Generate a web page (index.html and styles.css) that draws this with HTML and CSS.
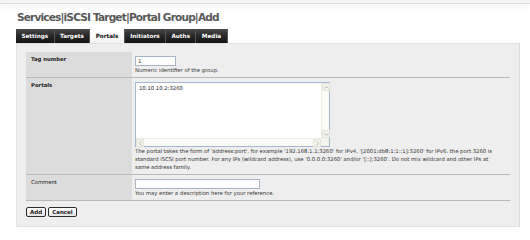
FILE: index.html
```html
<!DOCTYPE html>
<html lang="en">
<head>
    <meta charset="UTF-8">
    <title>Services|iSCSI Target|Portal Group|Add</title>
    <link rel="stylesheet" href="styles.css">
</head>
<body>
    <div class="topbar"></div>
    <div class="page">
        <h1 class="title">Services|iSCSI Target|Portal Group|Add</h1>

        <ul class="tabs">
            <li><a href="#">Settings</a></li>
            <li><a href="#">Targets</a></li>
            <li class="active"><a href="#">Portals</a></li>
            <li><a href="#">Initiators</a></li>
            <li><a href="#">Auths</a></li>
            <li><a href="#">Media</a></li>
        </ul>

        <div class="panel">
            <form>
                <table class="form-table">
                    <tr>
                        <td class="label required">Tag number</td>
                        <td class="value">
                            <input type="text" class="field tag" value="1">
                            <div class="hint">Numeric identifier of the group.</div>
                        </td>
                    </tr>
                    <tr>
                        <td class="label required">Portals</td>
                        <td class="value">
                            <div class="textbox">
                                <textarea class="area" wrap="off">10.10.10.2:3260</textarea>
                                <div class="vscroll">
                                    <span class="arrow"><svg width="5" height="3" viewBox="0 0 5 3"><polyline points="0.5,2.5 2.5,0.5 4.5,2.5" /></svg></span>
                                    <span class="arrow"><svg width="5" height="3" viewBox="0 0 5 3"><polyline points="0.5,0.5 2.5,2.5 4.5,0.5" /></svg></span>
                                </div>
                                <div class="hscroll">
                                    <span class="arrow"><svg width="3" height="5" viewBox="0 0 3 5"><polyline points="2.5,0.5 0.5,2.5 2.5,4.5" /></svg></span>
                                    <span class="arrow"><svg width="3" height="5" viewBox="0 0 3 5"><polyline points="0.5,0.5 2.5,2.5 0.5,4.5" /></svg></span>
                                </div>
                                <div class="corner"></div>
                            </div>
                            <div class="hint long">The portal takes the form of 'address:port'. for example '192.168.1.1:3260' for IPv4, '[2001:db8:1:1::1]:3260' for IPv6. the port 3260 is standard iSCSI port number. For any IPs (wildcard address), use '0.0.0.0:3260' and/or '[::]:3260'. Do not mix wildcard and other IPs at same address family.</div>
                        </td>
                    </tr>
                    <tr>
                        <td class="label">Comment</td>
                        <td class="value">
                            <input type="text" class="field comment">
                            <div class="hint">You may enter a description here for your reference.</div>
                        </td>
                    </tr>
                </table>

                <div class="buttons">
                    <button type="button">Add</button>
                    <button type="button">Cancel</button>
                </div>
            </form>
        </div>
    </div>
</body>
</html>
```

FILE: styles.css
```css
body {
    margin: 0;
    font-family: 'DejaVu Sans', sans-serif;
    font-size: 5.3px;
    color: #222;
    background-color: #fff;
}

.topbar {
    height: 3px;
    background-color: #f4f4f4;
    border-bottom: 1px solid #dcdcdc;
    box-shadow: 0 2px 6px #eee;
}

.page {
    padding: 0 10px 0 16px;
}

.title {
    margin: 7px 0 6px 1px;
    font-family: 'DejaVu Sans', sans-serif;
    font-size: 10.6px;
    line-height: 12px;
    letter-spacing: -0.85px;
    font-weight: bold;
    color: #595959;
}

.tabs {
    display: flex;
    list-style: none;
    margin: 0;
    padding: 0;
}

.tabs li a {
    display: block;
    height: 14px;
    line-height: 14px;
    padding: 0 5.4px;
    font-size: 5.7px;
    font-weight: bold;
    color: #fff;
    text-decoration: none;
    background: linear-gradient(#4a4a4a, #2a2a2a 45%, #141414);
    border-right: 1px solid #555;
}

.tabs li.active a {
    color: #111;
    background: linear-gradient(#fff, #f2f2f2);
}

.panel {
    background-color: #eee;
    border: 1px solid #e2e2e2;
    border-right-color: #dadada;
    padding: 8px 9px 9px 9px;
}

.form-table {
    width: 100%;
    border-collapse: collapse;
}

.form-table td {
    vertical-align: top;
    border-bottom: 1px solid #b9b9b9;
}

.label {
    width: 98px;
    padding: 4px 3px 2px 5px;
    background-color: #dcdcdc;
    color: #222;
}

.label.required {
    font-weight: bold;
}

.value {
    padding: 4px 6px 3px 3px;
}

.field {
    display: block;
    box-sizing: border-box;
    height: 10px;
    margin: 0;
    padding: 0 2px;
    border: 1px solid #a9b4c2;
    background-color: #fff;
    font-family: inherit;
    font-size: 5.3px;
    color: #222;
}

.field.tag {
    width: 41px;
}

.field.comment {
    width: 125px;
}

.hint {
    line-height: 8px;
    color: #333;
}

.textbox {
    display: grid;
    grid-template-columns: 1fr 8px;
    grid-template-rows: 1fr 8px;
    width: 195px;
    height: 65px;
    box-sizing: border-box;
    border: 1px solid #a5b8cf;
    background-color: #fff;
}

.area {
    border: none;
    resize: none;
    overflow: hidden;
    margin: 0;
    padding: 2px 3px;
    font-family: inherit;
    font-size: 5.3px;
    color: #222;
    background: transparent;
}

.vscroll,
.hscroll {
    display: flex;
    justify-content: space-between;
    background-color: #fbfbf6;
}

.vscroll {
    flex-direction: column;
    border-left: 1px solid #eef0e6;
}

.hscroll {
    border-top: 1px solid #eef0e6;
}

.arrow {
    display: flex;
    align-items: center;
    justify-content: center;
    width: 8px;
    height: 8px;
    box-sizing: border-box;
    background-color: #f3f3ec;
    border: 1px solid #e4e6dc;
}

.arrow polyline {
    fill: none;
    stroke: #b4b8ae;
    stroke-width: 1;
}

.corner {
    background-color: #f3f3ec;
}

.buttons {
    display: flex;
    gap: 2px;
    margin-top: 6px;
}

.buttons button {
    height: 10px;
    padding: 0 3px;
    border: 1px solid #2c2c2c;
    border-radius: 2px;
    background: linear-gradient(#fff, #e4e4e4);
    font-family: inherit;
    font-size: 5.5px;
    font-weight: bold;
    color: #222;
    cursor: pointer;
}
```
